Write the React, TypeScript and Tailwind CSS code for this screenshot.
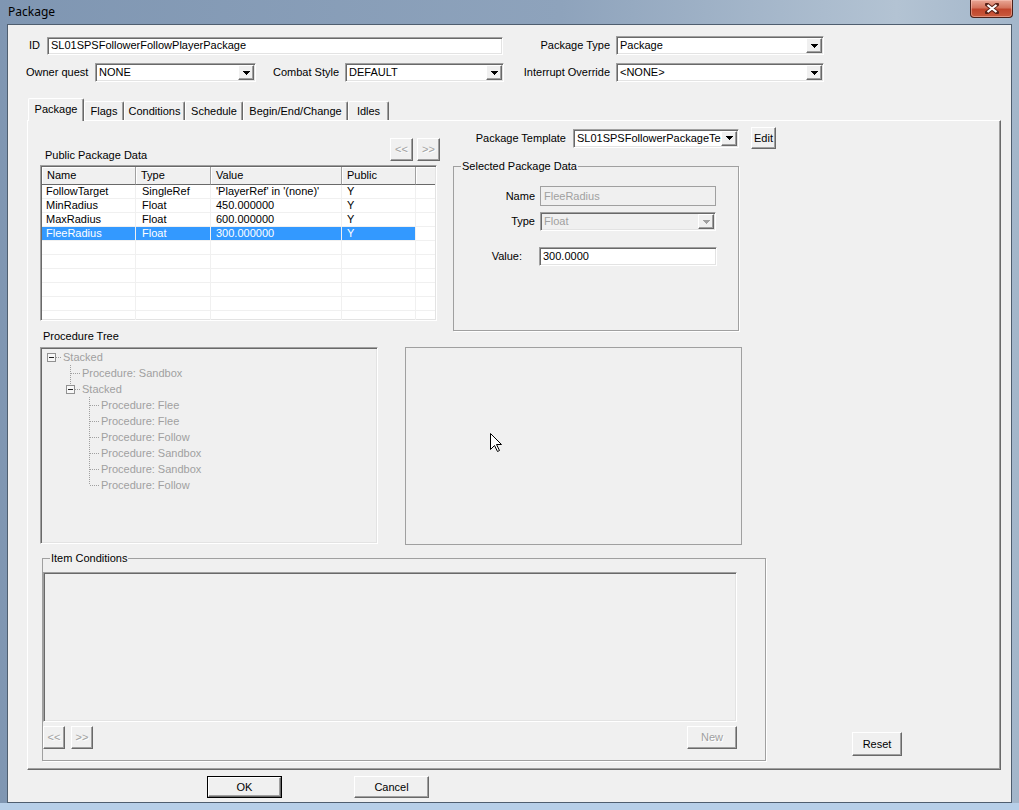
import React from "react";

/* classic win32 bevels */
const sunken =
  "border border-t-[#a0a0a0] border-l-[#a0a0a0] border-b-white border-r-white shadow-[inset_1px_1px_0_#696969,inset_-1px_-1px_0_#e3e3e3]";
const raised =
  "border border-t-white border-l-white border-b-[#696969] border-r-[#696969] shadow-[inset_-1px_-1px_0_#a0a0a0]";

function DownArrow({ disabled }: { disabled?: boolean }) {
  return (
    <svg width="7" height="4" viewBox="0 0 7 4" shapeRendering="crispEdges">
      <path
        d="M0 0h7v1h-1v1h-1v1h-1v1h-1v-1h-1v-1h-1v-1h-1z"
        fill={disabled ? "#a0a0a0" : "#000"}
      />
    </svg>
  );
}

function Combo({
  value,
  className,
  disabled,
}: {
  value: string;
  className: string;
  disabled?: boolean;
}) {
  return (
    <div
      className={`flex h-[19px] p-[1px] ${sunken} ${
        disabled ? "bg-[#f0f0f0] text-[#a0a0a0]" : "bg-white"
      } ${className}`}
    >
      <div className="flex-1 min-w-0 overflow-hidden whitespace-nowrap pl-[2px] leading-[15px]">{value}</div>
      <div
        className={`w-[16px] h-[15px] shrink-0 flex items-center justify-center bg-[#f0f0f0] ${raised}`}
      >
        <DownArrow disabled={disabled} />
      </div>
    </div>
  );
}

function TextBox({
  value,
  className,
  disabled,
}: {
  value: string;
  className: string;
  disabled?: boolean;
}) {
  return (
    <div
      className={`p-[1px] pl-[3px] whitespace-nowrap overflow-hidden flex items-center ${sunken} ${
        disabled ? "bg-[#f0f0f0] text-[#a0a0a0]" : "bg-white"
      } ${className}`}
    >
      {value}
    </div>
  );
}

function Btn({
  label,
  className,
  disabled,
}: {
  label: string;
  className: string;
  disabled?: boolean;
}) {
  return (
    <button
      type="button"
      className={`flex items-center justify-center bg-[#f0f0f0] ${raised} ${
        disabled ? "text-[#a0a0a0] [text-shadow:1px_1px_0_#fff]" : "text-black"
      } ${className}`}
    >
      {label}
    </button>
  );
}

/* ── Procedure tree ───────────────────────────────────────── */
type Cell = { up?: boolean; down?: boolean; right?: boolean; box?: boolean };

function TreeCell({ up, down, right, box }: Cell) {
  return (
    <svg width="19" height="16" viewBox="0 0 19 16" className="shrink-0" shapeRendering="crispEdges">
      {up && <line x1="9.5" y1="0" x2="9.5" y2="8" stroke="#a0a0a0" strokeDasharray="1 1" />}
      {down && <line x1="9.5" y1="8" x2="9.5" y2="16" stroke="#a0a0a0" strokeDasharray="1 1" />}
      {right && <line x1="10" y1="8.5" x2="19" y2="8.5" stroke="#a0a0a0" strokeDasharray="1 1" />}
      {box && (
        <>
          <rect x="5.5" y="4.5" width="8" height="8" fill="#f7f7f7" stroke="#919191" />
          <line x1="7" y1="8.5" x2="12" y2="8.5" stroke="#222" />
        </>
      )}
    </svg>
  );
}

const treeRows: { cells: Cell[]; label: string }[] = [
  { cells: [{ box: true, right: true }], label: "Stacked" },
  { cells: [{}, { up: true, down: true, right: true }], label: "Procedure: Sandbox" },
  { cells: [{}, { up: true, box: true, right: true }], label: "Stacked" },
  { cells: [{}, {}, { up: true, down: true, right: true }], label: "Procedure: Flee" },
  { cells: [{}, {}, { up: true, down: true, right: true }], label: "Procedure: Flee" },
  { cells: [{}, {}, { up: true, down: true, right: true }], label: "Procedure: Follow" },
  { cells: [{}, {}, { up: true, down: true, right: true }], label: "Procedure: Sandbox" },
  { cells: [{}, {}, { up: true, down: true, right: true }], label: "Procedure: Sandbox" },
  { cells: [{}, {}, { up: true, right: true }], label: "Procedure: Follow" },
];

/* ── Public package data list ─────────────────────────────── */
const colW = ["w-[94px]", "w-[75px]", "w-[131px]", "w-[74px]"];
const colPad = ["pl-[4px]", "pl-[6px]", "pl-[5px]", "pl-[5px]"];
const headers = ["Name", "Type", "Value", "Public"];
const dataRows = [
  ["FollowTarget", "SingleRef", "'PlayerRef' in '(none)'", "Y"],
  ["MinRadius", "Float", "450.000000", "Y"],
  ["MaxRadius", "Float", "600.000000", "Y"],
  ["FleeRadius", "Float", "300.000000", "Y"],
  ["", "", "", ""],
  ["", "", "", ""],
  ["", "", "", ""],
  ["", "", "", ""],
  ["", "", "", ""],
  ["", "", "", ""],
];

function PackageTable() {
  return (
    <div className={`w-[397px] h-[156px] mt-[4px] p-[1px] bg-white overflow-hidden ${sunken}`}>
      <div className="flex h-[18px]">
        {headers.map((h, i) => (
          <div
            key={h}
            className={`${colW[i]} shrink-0 pl-[5px] flex items-center bg-[#f0f0f0] border-r border-b border-r-[#a0a0a0] border-b-[#696969] shadow-[inset_1px_1px_0_#fff]`}
          >
            {h}
          </div>
        ))}
        <div className="flex-1 bg-[#f0f0f0] border-b border-b-[#696969] shadow-[inset_1px_1px_0_#fff]" />
      </div>
      {dataRows.map((r, ri) => {
        const sel = ri === 3;
        return (
          <div key={ri} className="flex h-[14px] border-b border-b-[#f0f0f0]">
            {r.map((c, ci) => (
              <div
                key={ci}
                className={`${colW[ci]} ${colPad[ci]} shrink-0 leading-[13px] border-r border-r-[#f0f0f0] whitespace-nowrap ${
                  sel ? "bg-[#3399ff] text-white" : ""
                }`}
              >
                {c}
              </div>
            ))}
            <div className="flex-1" />
          </div>
        );
      })}
    </div>
  );
}

function Cursor() {
  return (
    <svg width="13" height="20" viewBox="0 0 13 20">
      <path
        d="M0.5 0.5 L0.5 16.5 L4.5 12.5 L7.5 18.5 L9.5 17.5 L6.5 11.5 L11.5 11.5 Z"
        fill="#fff"
        stroke="#000"
        strokeLinejoin="miter"
      />
    </svg>
  );
}

const tabs = [
  { label: "Package", w: "w-[56px]", sel: true },
  { label: "Flags", w: "w-[40px]" },
  { label: "Conditions", w: "w-[61px]" },
  { label: "Schedule", w: "w-[58px]" },
  { label: "Begin/End/Change", w: "w-[105px]" },
  { label: "Idles", w: "w-[41px]" },
];

export default function App() {
  return (
    <div className="w-[1019px] h-[810px] flex flex-col overflow-hidden bg-[linear-gradient(to_right,#7f96b2,#8ea3bc_55%,#b3c3d3_88%,#a3b6ca)] font-['Liberation_Sans',Arial,sans-serif] text-[11px] leading-[13px] text-black">
      {/* title bar */}
      <div className="h-[24px] shrink-0 flex items-start">
        <span className="pl-[8px] pt-[4px] text-[12px] leading-[15px] font-['Noto_Sans',sans-serif]">Package</span>
        <div className="ml-auto mr-[6px] w-[43px] h-[18px] flex items-center justify-center rounded-b-[4px] border border-t-0 border-[#4a2019] bg-[linear-gradient(#e9a796,#d4745d_45%,#c0452c_55%,#c95a3d)] shadow-[inset_0_0_0_1px_rgba(255,210,200,0.45)]">
          <svg width="14" height="11" viewBox="0 0 14 11">
            <path d="M2 1.5 L12 9.5 M12 1.5 L2 9.5" stroke="#5a2218" strokeWidth="4" strokeLinecap="square" />
            <path d="M2.5 2 L11.5 9 M11.5 2 L2.5 9" stroke="#fff" strokeWidth="2.2" />
          </svg>
        </div>
      </div>

      {/* client area */}
      <div className="flex-1 min-h-0 flex px-[7px] pb-[7px] bg-[linear-gradient(to_bottom,transparent_calc(100%-7px),#b7cfe8_calc(100%-7px))]">
        <div className="flex-1 flex flex-col bg-[#f0f0f0] border border-[#4f5e6f]">
          {/* row 1 */}
          <div className="flex items-center h-[19px] mt-[11px]">
            <span className="ml-[21px] w-[18px] shrink-0">ID</span>
            <TextBox className="w-[456px] h-[18px]" value="SL01SPSFollowerFollowPlayerPackage" />
            <span className="w-[113px] pr-[6px] text-right shrink-0">Package Type</span>
            <Combo className="w-[208px]" value="Package" />
          </div>

          {/* row 2 */}
          <div className="flex items-center h-[19px] mt-[8px]">
            <span className="ml-[18px] w-[69px] shrink-0">Owner quest</span>
            <Combo className="w-[161px]" value="NONE" />
            <span className="w-[89px] pr-[6px] text-right shrink-0">Combat Style</span>
            <Combo className="w-[159px]" value="DEFAULT" />
            <span className="w-[112px] pr-[6px] text-right shrink-0">Interrupt Override</span>
            <Combo className="w-[208px]" value="<NONE>" />
          </div>

          {/* tab strip */}
          <div className="flex items-end h-[22px] mt-[16px] ml-[20px]">
            {tabs.map((t) =>
              t.sel ? (
                <div
                  key={t.label}
                  className={`${t.w} h-[23px] -mb-px relative z-10 flex items-start justify-center pt-[4px] bg-[#f0f0f0] border-t border-l border-r border-t-white border-l-white border-r-[#696969] shadow-[inset_-1px_0_0_#a0a0a0] rounded-t-[2px]`}
                >
                  {t.label}
                </div>
              ) : (
                <div
                  key={t.label}
                  className={`${t.w} h-[19px] flex items-start justify-center pt-[3px] bg-[#f0f0f0] border-t border-l border-r border-t-white border-l-white border-r-[#696969] shadow-[inset_-1px_0_0_#a0a0a0] rounded-t-[2px]`}
                >
                  {t.label}
                </div>
              )
            )}
          </div>

          {/* tab panel */}
          <div className="ml-[19px] w-[974px] h-[650px] flex flex-col border border-t-white border-l-white border-r-[#696969] border-b-[#696969] shadow-[inset_-1px_-1px_0_#a0a0a0]">
            {/* top section */}
            <div className="flex mt-[6px]">
              <div className="ml-[12px] mt-[11px] w-[400px] flex flex-col">
                <div className="flex items-end justify-between h-[23px]">
                  <span className="pl-[5px] mb-[-1px]">Public Package Data</span>
                  <div className="flex gap-[4px]">
                    <Btn label="<<" className="w-[23px] h-[23px]" disabled />
                    <Btn label=">>" className="w-[23px] h-[23px]" disabled />
                  </div>
                </div>
                <PackageTable />
              </div>

              <div className="ml-[13px] flex flex-col">
                <div className="flex items-center h-[22px]">
                  <span className="w-[120px] pr-[7px] text-right">Package Template</span>
                  <Combo className="w-[166px]" value="SL01SPSFollowerPackageTer" />
                  <Btn label="Edit" className="ml-[12px] w-[25px] h-[22px]" />
                </div>
                <fieldset className="mt-[11px] w-[286px] h-[171px] border border-[#a0a0a0] shadow-[1px_1px_0_#fff]">
                  <legend className="ml-[7px] px-[1px]">Selected Package Data</legend>
                  <div className="flex items-center h-[20px] mt-[13px]">
                    <span className="w-[86px] pr-[5px] text-right">Name</span>
                    <TextBox className="w-[176px] h-[20px] !border-[#a0a0a0] !shadow-none" value="FleeRadius" disabled />
                  </div>
                  <div className="flex items-center h-[19px] mt-[6px]">
                    <span className="w-[86px] pr-[5px] text-right">Type</span>
                    <Combo className="w-[176px]" value="Float" disabled />
                  </div>
                  <div className="flex items-center h-[19px] mt-[16px]">
                    <span className="w-[85px] pr-[17px] text-right">Value:</span>
                    <TextBox className="w-[178px] h-[19px]" value="300.0000" />
                  </div>
                </fieldset>
              </div>
            </div>

            {/* middle section */}
            <div className="flex">
              <div className="ml-[12px] flex flex-col">
                <span className="h-[16px] pl-[3px] -mt-px">Procedure Tree</span>
                <div className={`w-[338px] h-[197px] mt-px p-[1px] bg-[#f0f0f0] ${sunken}`}>
                  {treeRows.map((r, i) => (
                    <div key={i} className="flex items-center h-[16px]">
                      {r.cells.map((c, j) => (
                        <TreeCell key={j} {...c} />
                      ))}
                      <span className="ml-[2px] text-[#a0a0a0] whitespace-nowrap">{r.label}</span>
                    </div>
                  ))}
                </div>
              </div>
              <div className="ml-[27px] mt-[16px] w-[337px] h-[198px] border border-[#a0a0a0] pl-[84px] pt-[85px]">
                <Cursor />
              </div>
            </div>

            {/* bottom section */}
            <div className="flex items-end">
              <fieldset className="ml-[14px] mt-[7px] w-[724px] h-[209px] border border-[#a0a0a0] shadow-[1px_1px_0_#fff]">
                <legend className="ml-[7px] px-[1px]">Item Conditions</legend>
                <div className={`mt-[7px] w-[694px] h-[150px] bg-[#f0f0f0] ${sunken}`} />
                <div className="mt-[4px] w-[694px] flex h-[23px]">
                  <Btn label="<<" className="w-[22px] h-[23px]" disabled />
                  <Btn label=">>" className="ml-[6px] w-[22px] h-[23px]" disabled />
                  <Btn label="New" className="ml-auto w-[50px] h-[23px]" disabled />
                </div>
              </fieldset>
              <Btn label="Reset" className="ml-[86px] mb-[5px] w-[50px] h-[24px]" />
            </div>
          </div>

          {/* dialog buttons */}
          <div className="flex mt-[6px] ml-[199px]">
            <div className="border border-black">
              <Btn label="OK" className="w-[73px] h-[20px]" />
            </div>
            <Btn label="Cancel" className="ml-[72px] w-[75px] h-[22px]" />
          </div>
        </div>
      </div>
    </div>
  );
}
